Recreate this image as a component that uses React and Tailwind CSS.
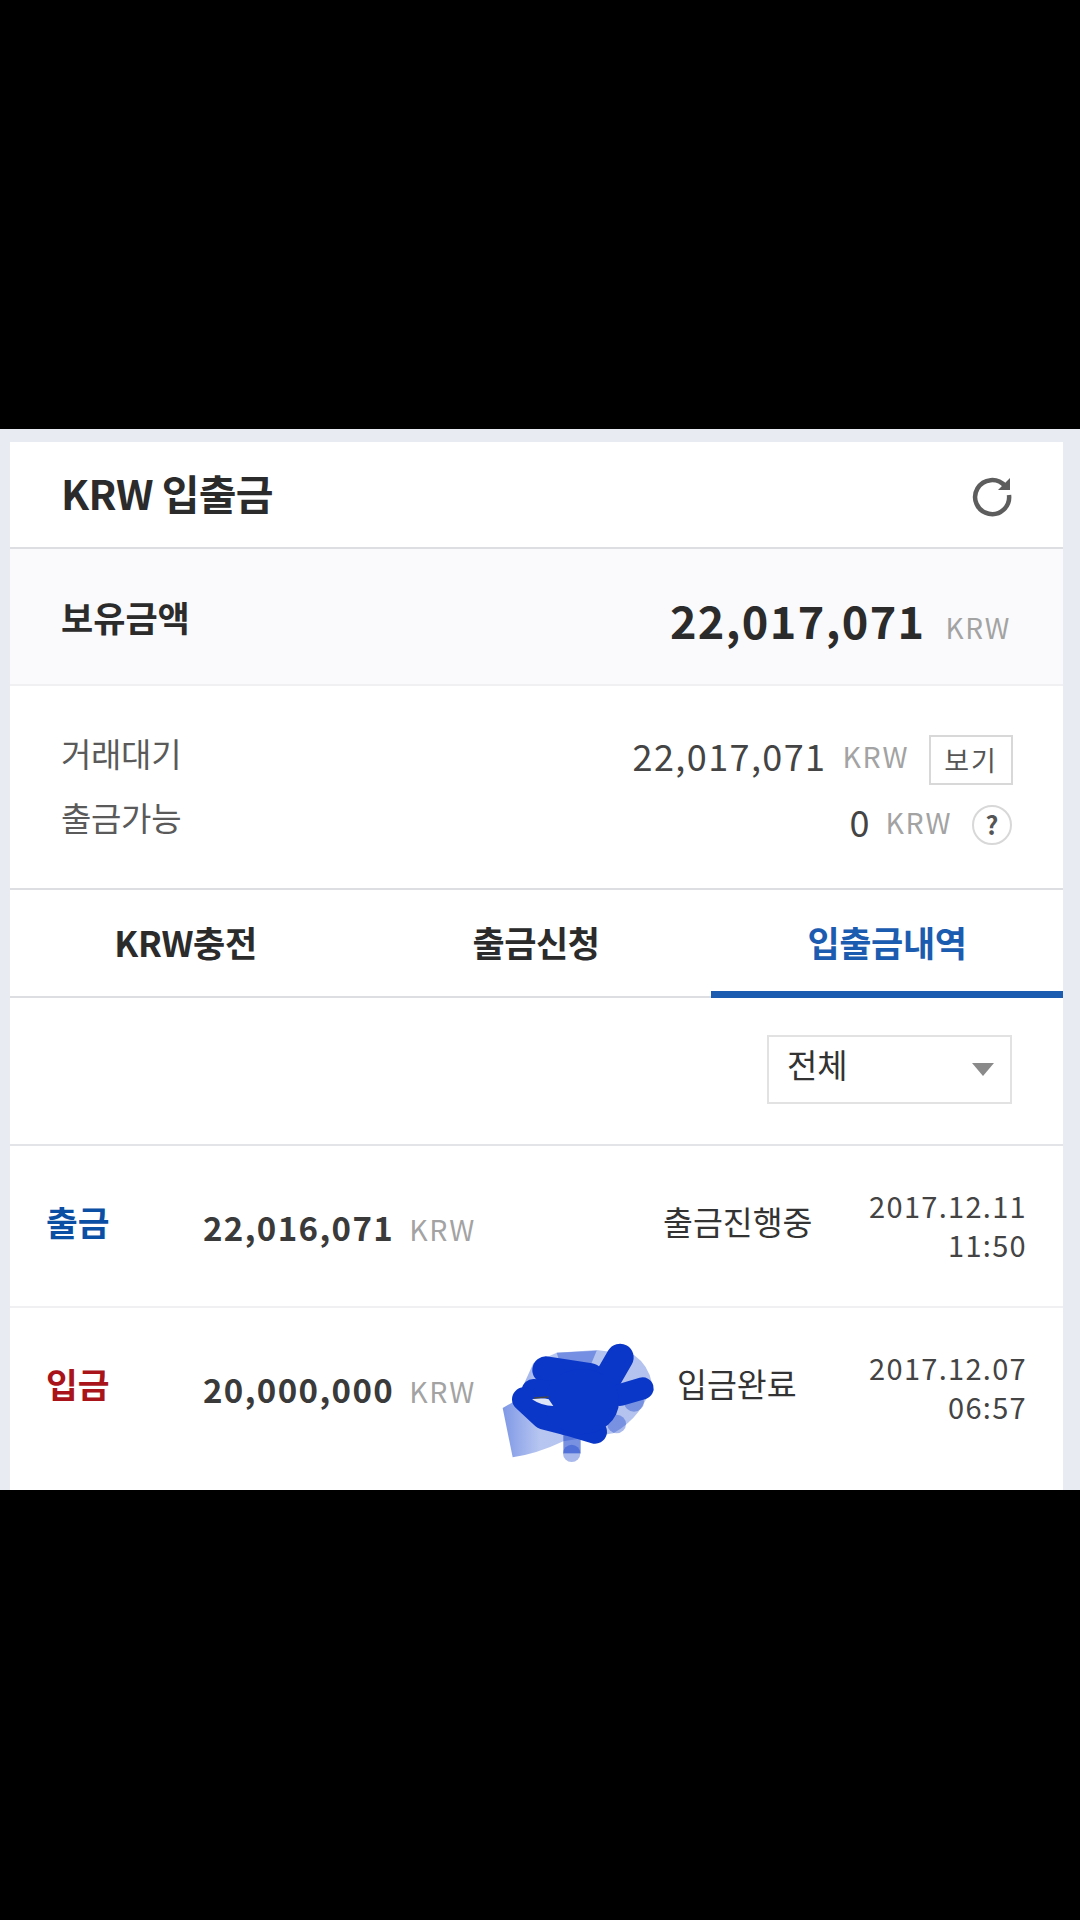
import React from "react";

const Krw = ({ className = "" }) => (
  <span className={`text-[#a3a3a3] font-normal ${className}`}>KRW</span>
);

const Scribble = () => (
  <svg viewBox="0 0 600 480" className="absolute left-[470px] top-[12px] w-[200px] h-[160px]">
    <defs>
      <linearGradient id="smear" x1="0" x2="1" y1="0" y2="0">
        <stop offset="0" stopColor="#7f98e6" />
        <stop offset="0.25" stopColor="#b7c6f0" />
        <stop offset="1" stopColor="#b3c2ee" />
      </linearGradient>
    </defs>
    <path
      d="M68 264 L98 412 Q170 402 250 364 L400 340 Q490 290 516 190 Q505 135 462 105 L350 90 L230 98 L160 130 L110 240 Z"
      fill="url(#smear)"
    />
    <path d="M230 98 L350 92 L330 140 L240 130 Z" fill="#7590e2" />
    <circle cx="275" cy="400" r="26" fill="#0a37c8" opacity="0.35" />
    <rect x="250" y="340" width="52" height="60" fill="#0a37c8" opacity="0.55" />
    <circle cx="410" cy="312" r="28" fill="#0a37c8" opacity="0.35" />
    <circle cx="462" cy="245" r="30" fill="#0a37c8" opacity="0.35" />
    <g fill="none" stroke="#0a37c8" strokeLinecap="round" strokeLinejoin="round">
      <path d="M198 150 L330 170" strokeWidth="82" />
      <path d="M375 190 L420 112" strokeWidth="82" />
      <path d="M420 225 L488 205" strokeWidth="66" />
      <path d="M260 310 L345 335" strokeWidth="72" />
      <path d="M160 212 L300 225" strokeWidth="70" />
      <path d="M132 238 L190 292 L260 310" strokeWidth="72" />
    </g>
    <ellipse cx="305" cy="245" rx="112" ry="98" fill="#0a37c8" />
    <path d="M156 238 Q185 232 206 238 L220 258 Q185 258 156 238 Z" fill="#dfe5f8" />
    <path d="M162 234 L206 231" stroke="#444" strokeWidth="4" />
  </svg>
);

const rows = [
  {
    type: "출금",
    color: "text-[#0b4fa5]",
    amount: "22,016,071",
    status: "출금진행중",
    statusW: "left-[653px]",
    date: "2017.12.11",
    time: "11:50",
    h: "h-[162px]",
  },
  {
    type: "입금",
    color: "text-[#a8141a]",
    amount: "20,000,000",
    status: "입금완료",
    statusW: "left-[667px]",
    date: "2017.12.07",
    time: "06:57",
    h: "h-[181px]",
  },
];

export default function App() {
  return (
    <div className="w-[1080px] h-[1920px] bg-black flex flex-col font-['Noto_Sans_CJK_KR','Noto_Sans',sans-serif] text-[#2b2b2b]">
      <div className="h-[429px] shrink-0" />
      <div className="h-[1061px] shrink-0 bg-[#e8ebf1] pt-[13px] pl-[10px] pr-[17px]">
        <div className="bg-white h-full flex flex-col">
          {/* 헤더 */}
          <div className="h-[107px] shrink-0 border-b-2 border-[#dcdee2] flex items-center justify-between pl-[51px] pr-[49px]">
            <h1 className="text-[41px] font-bold tracking-[-0.6px] pb-[3px]">KRW 입출금</h1>
            <svg viewBox="0 0 44 44" className="w-[44px] h-[44px]" fill="none" stroke="#5d5d5d" strokeWidth="4.5">
              <path d="M35 13 A17 17 0 1 0 39 22" />
              <path d="M40 5 V17 H28 Z" fill="#5d5d5d" stroke="none" />
            </svg>
          </div>

          {/* 보유금액 */}
          <div className="h-[137px] shrink-0 bg-[#fafafc] border-b-2 border-[#f0f0f2] flex items-center justify-between pl-[51px] pr-[52px]">
            <span className="text-[35px] font-bold pt-[2px]">보유금액</span>
            <span className="flex items-baseline mt-[6px]">
              <span className="text-[45px] font-bold tracking-[1.4px]">22,017,071</span>
              <Krw className="text-[28px] ml-[20px] tracking-[1.6px]" />
            </span>
          </div>

          {/* 거래대기 / 출금가능 */}
          <div className="h-[204px] shrink-0 border-b-2 border-[#dcdee2] flex flex-col pl-[51px] pr-[50px] pt-[49px]">
            <div className="flex items-center justify-between h-[50px]">
              <span className="text-[33px] text-[#5a5a5a] pb-[12px] tracking-[-0.3px]">거래대기</span>
              <span className="flex items-center">
                <span className="text-[36px] text-[#444] tracking-[1.4px] pb-[10px]">22,017,071</span>
                <Krw className="text-[28.5px] ml-[16px] tracking-[1.6px] pb-[8px]" />
                <span className="ml-[20px] w-[84px] h-[50px] border-2 border-[#d8d8d8] flex items-center justify-center text-[27px] text-[#555] tracking-[2px]">
                  보기
                </span>
              </span>
            </div>
            <div className="flex items-center justify-between h-[40px] mt-[20px]">
              <span className="text-[33px] text-[#5a5a5a] pb-[14px] tracking-[-0.3px]">출금가능</span>
              <span className="flex items-center">
                <span className="text-[36px] text-[#444] pb-[8px]">0</span>
                <Krw className="text-[28.5px] ml-[16px] tracking-[1.6px] pb-[6px]" />
                <span className="ml-[20px] mr-[1px] w-[40px] h-[40px] rounded-full border-2 border-[#d8d8d8] flex items-center justify-center text-[25px] font-bold text-[#555]">
                  ?
                </span>
              </span>
            </div>
          </div>

          {/* 탭 */}
          <div className="h-[108px] shrink-0 border-b-2 border-[#dcdee2] flex text-[35px] font-bold tracking-[-0.4px]">
            <div className="w-[351px] flex items-center justify-center pb-[2px]">KRW충전</div>
            <div className="w-[350px] flex items-center justify-center pb-[2px]">출금신청</div>
            <div className="flex-1 flex items-center justify-center pt-[4px] text-[#1c5cb0] border-b-[7px] border-[#1c5cb0] -mb-[2px]">
              입출금내역
            </div>
          </div>

          {/* 필터 */}
          <div className="h-[148px] shrink-0 border-b-2 border-[#e3e4e7] flex items-center justify-end pr-[51px] pb-[4px]">
            <div className="w-[245px] h-[69px] border-2 border-[#e2e2e2] flex items-center justify-between pl-[18px] pr-[16px]">
              <span className="text-[33px] text-[#333] -mt-[8px]">전체</span>
              <span className="w-0 h-0 border-x-[11px] border-x-transparent border-t-[13px] border-t-[#8a8a8a]" />
            </div>
          </div>

          {/* 내역 */}
          {rows.map((r, i) => (
            <div
              key={r.type}
              className={`relative shrink-0 ${r.h} ${i === 0 ? "border-b-2 border-[#f0f0f2]" : ""}`}
            >
              <span className={`absolute left-[36px] top-[53px] text-[34.5px] font-bold leading-[44px] ${r.color}`}>
                {r.type}
              </span>
              <span className="absolute left-[193px] top-[59px] flex items-baseline leading-[44px]">
                <span className="text-[33px] font-bold tracking-[1.4px] text-[#3a3a3a]">{r.amount}</span>
                <Krw className="text-[28.5px] ml-[15px] tracking-[1.6px]" />
              </span>
              <span className={`absolute ${r.statusW} top-[53px] text-[32.5px] leading-[44px] text-[#333]`}>
                {r.status}
              </span>
              <span className="absolute right-[36px] top-[40px] text-right text-[29px] leading-[39px] tracking-[1.3px] text-[#444]">
                {r.date}
                <br />
                {r.time}
              </span>
              {i === 1 && <Scribble />}
            </div>
          ))}
        </div>
      </div>
    </div>
  );
}
